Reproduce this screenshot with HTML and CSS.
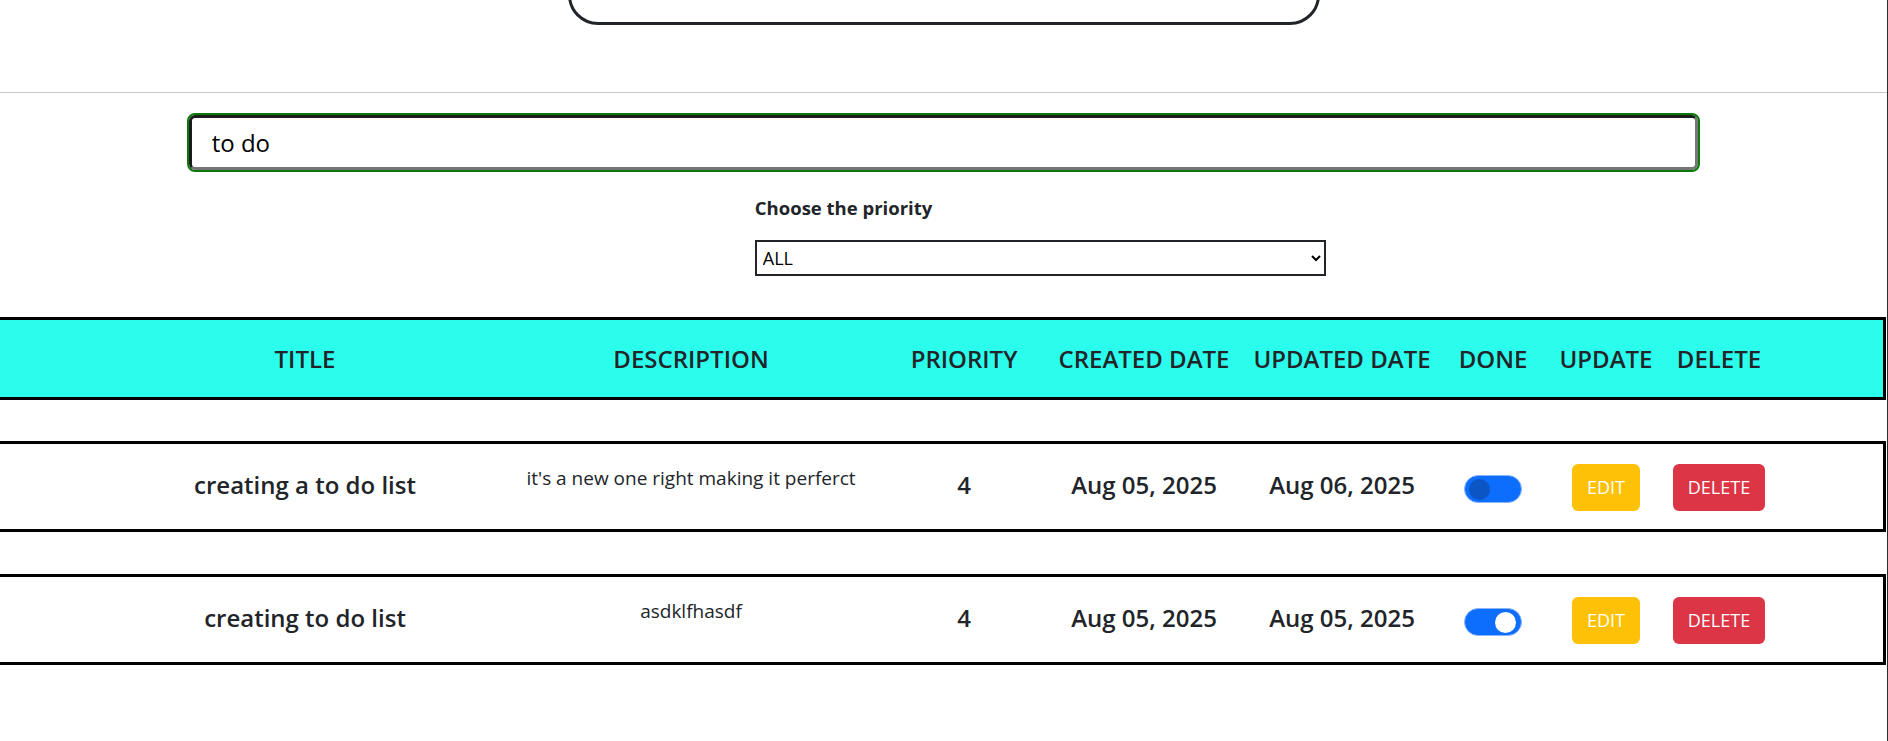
FILE: index.html
```html
<!DOCTYPE html>
<html lang="en">
<head>
<meta charset="utf-8">
<title>Todo list</title>
<link rel="stylesheet" href="styles.css">
</head>
<body>
<div class="page">
  <div class="topbar">
    <div class="topcard"></div>
  </div>

  <div class="search">
    <input class="search-input" type="text" value="to do">
  </div>

  <div class="filter">
    <label class="filter-label" for="prio">Choose the priority</label>
    <select class="filter-select" id="prio">
      <option>ALL</option>
    </select>
  </div>

  <div class="table-head">
    <div class="cell">TITLE</div>
    <div class="cell">DESCRIPTION</div>
    <div class="cell">PRIORITY</div>
    <div class="cell">CREATED DATE</div>
    <div class="cell">UPDATED DATE</div>
    <div class="cell">DONE</div>
    <div class="cell">UPDATE</div>
    <div class="cell">DELETE</div>
  </div>

  <div class="todo-row">
    <div class="cell"><span class="val">creating a to do list</span></div>
    <div class="cell"><p class="desc">it's a new one right making it perferct</p></div>
    <div class="cell"><span class="val">4</span></div>
    <div class="cell"><span class="val">Aug 05, 2025</span></div>
    <div class="cell"><span class="val">Aug 06, 2025</span></div>
    <div class="cell"><span class="switch switch-off"><span class="knob"></span></span></div>
    <div class="cell"><button class="btn btn-edit">EDIT</button></div>
    <div class="cell"><button class="btn btn-delete">DELETE</button></div>
  </div>

  <div class="todo-row">
    <div class="cell"><span class="val">creating to do list</span></div>
    <div class="cell"><p class="desc">asdklfhasdf</p></div>
    <div class="cell"><span class="val">4</span></div>
    <div class="cell"><span class="val">Aug 05, 2025</span></div>
    <div class="cell"><span class="val">Aug 05, 2025</span></div>
    <div class="cell"><span class="switch switch-on"><span class="knob"></span></span></div>
    <div class="cell"><button class="btn btn-edit">EDIT</button></div>
    <div class="cell"><button class="btn btn-delete">DELETE</button></div>
  </div>
</div>
</body>
</html>
```

FILE: styles.css
```css
* {
  box-sizing: border-box;
}

html, body {
  margin: 0;
  padding: 0;
  background: #ffffff;
}

body {
  font-family: "Open Sans", "Noto Sans", "Liberation Sans", sans-serif;
  color: #212529;
  overflow: hidden;
}

.page {
  min-height: 741px;
  border-right: 1px solid #2b2b2b;
  overflow: hidden;
}

/* top area */
.topbar {
  display: flow-root;
  height: 93px;
  border-bottom: 1px solid #c8c8c8;
}

.topcard {
  width: 752px;
  height: 60px;
  margin: -35px auto 0;
  border: 3px solid #212529;
  border-radius: 34px;
  background: #fff;
}

/* search */
.search {
  padding: 22px 0 0;
  display: flex;
  justify-content: center;
}

.search-input {
  width: 80%;
  height: 55px;
  margin: 0;
  padding: 0 20px;
  border: 3px solid;
  border-color: #1c1c1c #767676 #767676 #1c1c1c;
  border-radius: 6px;
  outline: 2px solid #0b7a0b;
  outline-offset: 0;
  font-family: "Open Sans", "Noto Sans", sans-serif;
  font-size: 24px;
  color: #000;
  background: #fff;
}

/* filter */
.filter {
  margin-left: 40%;
  padding-top: 26px;
  display: flex;
  flex-direction: column;
  align-items: flex-start;
}

.filter-label {
  font-size: 18.5px;
  font-weight: 700;
  line-height: 24px;
  color: #212529;
}

.filter-select {
  margin-top: 20px;
  width: 571px;
  height: 36px;
  border: 2px solid #212529;
  border-radius: 0;
  background: #fff;
  font-family: "Open Sans", "Noto Sans", sans-serif;
  font-size: 18px;
  color: #000;
  padding: 0 2px;
}

/* table */
.table-head,
.todo-row {
  display: grid;
  grid-template-columns: 386px 386px 160px 200px 196px 106px 120px 106px;
  align-items: center;
  margin-left: -10px;
  margin-right: 1px;
  padding-left: 119px;
  border: 3px solid #000;
}

.table-head {
  margin-top: 41px;
  height: 83px;
  background: #2bfdec;
  font-size: 24px;
  font-weight: 600;
  color: #212529;
}

.todo-row {
  height: 91px;
  margin-top: 41px;
  background: #fff;
}

.todo-row + .todo-row {
  margin-top: 42px;
  height: 91px;
}

.cell {
  display: flex;
  justify-content: center;
  align-items: center;
  white-space: nowrap;
}

.val {
  font-size: 24px;
  font-weight: 600;
  color: #212529;
  margin-bottom: 4px;
}

.desc {
  margin: 0 0 16px;
  font-size: 19px;
  line-height: 27px;
  color: #212529;
}

/* switch */
.switch {
  position: relative;
  display: block;
  width: 58px;
  height: 28px;
  border-radius: 14px;
  background: #0d6efd;
  border: 1px solid #8bb5f8;
  margin-top: 4px;
}

.knob {
  position: absolute;
  top: 3px;
  width: 21px;
  height: 21px;
  border-radius: 50%;
}

.switch-off .knob {
  left: 4px;
  background: #0b56c4;
}

.switch-on .knob {
  right: 5px;
  background: #ffffff;
}

/* buttons */
.btn {
  font-family: "Open Sans", "Noto Sans", sans-serif;
  font-size: 18px;
  line-height: 27px;
  padding: 10px 15px;
  border: 0;
  border-radius: 6px;
  color: #fff;
  cursor: pointer;
  margin-top: 2px;
}

.btn-edit {
  background: #ffc107;
}

.btn-delete {
  background: #dc3545;
}
```
